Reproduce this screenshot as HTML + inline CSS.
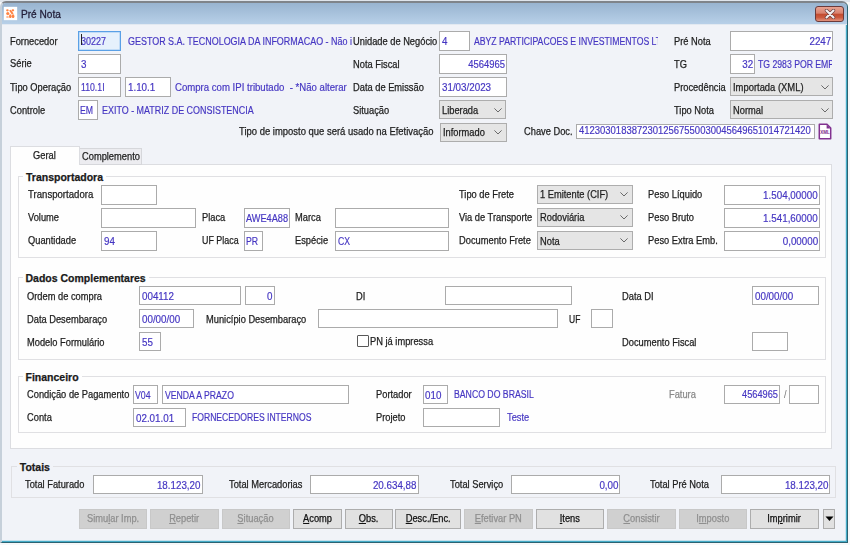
<!DOCTYPE html><html><head><meta charset="utf-8"><style>
*{margin:0;padding:0;box-sizing:border-box}
html,body{width:850px;height:545px;overflow:hidden;background:#f7f8f9;font-family:"Liberation Sans",sans-serif;font-size:10px;color:#1e1e1e}
#win{position:absolute;left:0;top:1px;width:848px;height:542px;background:#f1f3f8;border-top:2px solid #7f848a;border-left:2px solid #c6d0da;border-right:1.3px solid #2b6372;border-bottom:1.3px solid #2b6372;border-radius:6px 6px 0 0;box-shadow:inset -1.2px -1.2px 0 #45acc8;overflow:hidden}
#tb{position:absolute;left:0;top:0;width:100%;height:20.7px;background:linear-gradient(#98b4d0,#b8d0e8)}
#tbl{position:absolute;left:0;top:20.7px;width:100%;height:1px;background:#e2e9f1}
.abs{position:absolute}
.l,.v,.gt{position:absolute;white-space:nowrap;line-height:14px;height:14px;transform-origin:0 50%;-webkit-text-stroke:0.25px currentColor}
.ft{position:absolute;white-space:nowrap;line-height:14px;height:14px;-webkit-text-stroke:0.25px currentColor}
.bt{display:inline-block;white-space:nowrap;line-height:17px;-webkit-text-stroke:0.25px currentColor}
.v{color:#4536c2;-webkit-text-stroke:0.18px currentColor !important}
.gt{font-weight:bold;font-size:10.5px;background:#fefefe;padding:0 3px;color:#1a1a1a;line-height:15px;height:15px}
.f{position:absolute;background:#fff;border:1px solid #ababab;color:#4536c2;overflow:hidden}
.f .ft{-webkit-text-stroke:0.18px currentColor}
.c{position:absolute;background:#e5e5e5;border:1px solid #adadad;color:#1e1e1e;overflow:hidden}
.arr{position:absolute}
.g{position:absolute;border:1px solid #e0e0e3}
.b{position:absolute;background:#e1e1e1;border:1px solid #adadad;text-align:center;color:#111;white-space:nowrap}
.b.d{background:#d0d0d0;border-color:#c8c8c8;color:#8f8f8f}
u{text-decoration:underline}
</style></head><body>
<div class="abs" style="left:0;top:0;width:850px;height:2px;background:#dfe5ec"></div>
<div id="win">
<div id="tb"></div><div id="tbl"></div>
</div>
<div class="abs" style="left:4px;top:7px;width:13px;height:13px;background:#fff;box-shadow:0 0 1px #fff"></div>
<svg class="abs" style="left:6.3px;top:8.6px" width="8.5" height="9.6" viewBox="0 0 8.5 9.6"><defs><filter id="bl" x="-20%" y="-20%" width="140%" height="140%"><feGaussianBlur stdDeviation="0.3"/></filter></defs><g fill="#ff8444" filter="url(#bl)"><ellipse cx="1.4" cy="1.3" rx="1.3" ry="1.1"/><ellipse cx="6.9" cy="1.3" rx="1.3" ry="1.1"/><path d="M3.2 1.4 L4.8 0.7 L7.6 4.6 L5.8 5.4 Z"/><ellipse cx="1.8" cy="4.4" rx="1.6" ry="1.5"/><ellipse cx="1.5" cy="8" rx="1.3" ry="1.3" opacity="0.55"/><ellipse cx="4.3" cy="7.3" rx="1.3" ry="2"/><ellipse cx="7.1" cy="7.3" rx="1.3" ry="2"/></g></svg>
<div class="abs" style="left:21px;top:5.7px;font-size:11px;line-height:16px;color:#231f3a;transform:scaleX(0.92);transform-origin:0 50%;-webkit-text-stroke:0.3px #231f3a">Pré Nota</div>
<div class="abs" style="left:815.3px;top:6.2px;width:28.8px;height:15.9px;border:1px solid #6b3a3a;border-radius:3px;background:linear-gradient(#e8a393 0%,#d9826e 45%,#c24a2e 50%,#cc5b3f 75%,#e2937e 100%)"></div>
<svg class="abs" style="left:823.5px;top:9px" width="12" height="10" viewBox="0 0 12 10"><path d="M2.5 1.5 L9.5 8.5 M9.5 1.5 L2.5 8.5" stroke="#6a4040" stroke-width="3.4" stroke-linecap="round"/><path d="M2.5 1.5 L9.5 8.5 M9.5 1.5 L2.5 8.5" stroke="#f4f0f0" stroke-width="2.1" stroke-linecap="round"/></svg>
<div class="l" style="left:10px;top:35.0px;transform:scaleX(0.93);">Fornecedor</div>
<div class="f" style="left:78px;top:31px;width:43px;height:20px;background:#e6f1fc;border:1px solid #5aa0e6;box-shadow:inset 0 0 0 0.5px #9cc8f2"><span class="ft" style="left:2px;top:3.2px;transform:scaleX(0.9);transform-origin:0 50%">30227</span></div>
<div class="abs" style="left:81px;top:34px;width:1px;height:11px;background:#222"></div>
<div class="abs" style="left:127.6px;top:34.5px;width:224px;height:14px;overflow:hidden"><span class="ft v" style="left:0;top:0;transform:scaleX(0.895);transform-origin:0 50%">GESTOR S.A. TECNOLOGIA DA INFORMACAO - Não informado</span></div>
<div class="l" style="left:352.5px;top:35.0px;transform:scaleX(0.93);">Unidade de Negócio</div>
<div class="f" style="left:439px;top:31px;width:31px;height:20px;"><span class="ft" style="left:2px;top:3.2px;transform:scaleX(0.98);transform-origin:0 50%">4</span></div>
<div class="abs" style="left:473.7px;top:34.5px;width:184.5px;height:14px;overflow:hidden"><span class="ft v" style="left:0;top:0;transform:scaleX(0.867);transform-origin:0 50%">ABYZ PARTICIPACOES E INVESTIMENTOS LTDA</span></div>
<div class="l" style="left:674px;top:35.0px;transform:scaleX(0.93);">Pré Nota</div>
<div class="f" style="left:730px;top:31px;width:103px;height:20px;"><span class="ft" style="right:1px;top:3.2px;transform:scaleX(0.98);transform-origin:100% 50%">2247</span></div>
<div class="l" style="left:10px;top:56.7px;transform:scaleX(0.93);">Série</div>
<div class="f" style="left:78px;top:54px;width:43px;height:20px;"><span class="ft" style="left:2px;top:3.2px;transform:scaleX(0.98);transform-origin:0 50%">3</span></div>
<div class="l" style="left:352.5px;top:58.0px;transform:scaleX(0.93);">Nota Fiscal</div>
<div class="f" style="left:439px;top:54px;width:67.5px;height:20px;"><span class="ft" style="right:1px;top:3.2px;transform:scaleX(0.943);transform-origin:100% 50%">4564965</span></div>
<div class="l" style="left:674px;top:58.0px;transform:scaleX(0.93);">TG</div>
<div class="f" style="left:730px;top:54px;width:24.5px;height:20px;"><span class="ft" style="right:0.30000000000000004px;top:3.2px;transform:scaleX(0.98);transform-origin:100% 50%">32</span></div>
<div class="abs" style="left:758.2px;top:57.5px;width:74px;height:14px;overflow:hidden"><span class="ft v" style="left:0;top:0;transform:scaleX(0.867);transform-origin:0 50%">TG 2983 POR EMPRESA</span></div>
<div class="l" style="left:10px;top:81.0px;transform:scaleX(0.93);">Tipo Operação</div>
<div class="f" style="left:78px;top:77px;width:43px;height:20px;"><span class="ft" style="left:2px;top:3.2px;transform:scaleX(0.87);transform-origin:0 50%">110.1I</span></div>
<div class="f" style="left:125px;top:77px;width:46px;height:20px;"><span class="ft" style="left:2px;top:3.2px;transform:scaleX(0.98);transform-origin:0 50%">1.10.1</span></div>
<div class="v" style="left:175px;top:80.5px;transform:scaleX(0.96);">Compra com IPI tributado&nbsp; - *Não alterar</div>
<div class="l" style="left:352.5px;top:81.0px;transform:scaleX(0.93);">Data de Emissão</div>
<div class="f" style="left:439px;top:77px;width:67.5px;height:20px;"><span class="ft" style="left:2px;top:3.2px;transform:scaleX(0.98);transform-origin:0 50%">31/03/2023</span></div>
<div class="l" style="left:674px;top:81.0px;transform:scaleX(0.93);">Procedência</div>
<div class="c" style="left:730px;top:77px;width:103px;height:19px;"><span class="ft" style="left:2px;top:2.7px;transform:scaleX(0.94);transform-origin:0 50%">Importada (XML)</span><svg class="arr" style="right:3.5px;top:6.55px" width="8" height="4.5" viewBox="0 0 8 4.5"><path d="M0.4 0.4 L4 4 L7.6 0.4" fill="none" stroke="#6a6a6a" stroke-width="1"/></svg></div>
<div class="l" style="left:10px;top:104.0px;transform:scaleX(0.93);">Controle</div>
<div class="f" style="left:78px;top:100px;width:20px;height:20px;"><span class="ft" style="left:1px;top:3.2px;transform:scaleX(0.87);transform-origin:0 50%">EM</span></div>
<div class="v" style="left:101.7px;top:103.5px;transform:scaleX(0.894);">EXITO - MATRIZ DE CONSISTENCIA</div>
<div class="l" style="left:352.5px;top:104.0px;transform:scaleX(0.93);">Situação</div>
<div class="c" style="left:439px;top:100.2px;width:67px;height:18.799999999999997px;"><span class="ft" style="left:2px;top:2.5999999999999988px;transform:scaleX(0.93);transform-origin:0 50%">Liberada</span><svg class="arr" style="right:3.5px;top:6.449999999999998px" width="8" height="4.5" viewBox="0 0 8 4.5"><path d="M0.4 0.4 L4 4 L7.6 0.4" fill="none" stroke="#6a6a6a" stroke-width="1"/></svg></div>
<div class="l" style="left:674px;top:104.0px;transform:scaleX(0.93);">Tipo Nota</div>
<div class="c" style="left:730px;top:100.2px;width:103px;height:18.799999999999997px;"><span class="ft" style="left:2px;top:2.5999999999999988px;transform:scaleX(0.93);transform-origin:0 50%">Normal</span><svg class="arr" style="right:3.5px;top:6.449999999999998px" width="8" height="4.5" viewBox="0 0 8 4.5"><path d="M0.4 0.4 L4 4 L7.6 0.4" fill="none" stroke="#6a6a6a" stroke-width="1"/></svg></div>
<div class="l" style="left:239px;top:125.0px;transform:scaleX(0.945);">Tipo de imposto que será usado na Efetivação</div>
<div class="c" style="left:439.5px;top:123px;width:67.0px;height:18.5px;"><span class="ft" style="left:2px;top:2.45px;transform:scaleX(0.93);transform-origin:0 50%">Informado</span><svg class="arr" style="right:3.5px;top:6.3px" width="8" height="4.5" viewBox="0 0 8 4.5"><path d="M0.4 0.4 L4 4 L7.6 0.4" fill="none" stroke="#6a6a6a" stroke-width="1"/></svg></div>
<div class="l" style="left:524px;top:124.5px;transform:scaleX(0.93);">Chave Doc.</div>
<div class="f" style="left:575.5px;top:123.5px;width:239.5px;height:15.300000000000011px;"><span class="ft" style="left:2px;top:-0.8499999999999943px;transform:scaleX(0.947);transform-origin:0 50%">41230301838723012567550030045649651014721420</span></div>
<svg class="abs" style="left:817.5px;top:122.5px" width="14" height="17" viewBox="0 0 14 17"><path d="M1.3 1.3 H9 L12.7 5 V15.7 H1.3 Z" fill="#fff" stroke="#823290" stroke-width="1.5" stroke-linejoin="round"/><path d="M8.6 1.5 L12.5 5.4 L8.6 5.4 Z" fill="#823290"/><text x="6.9" y="11.3" font-size="5.2" text-anchor="middle" fill="#7a2888" font-family="Liberation Sans" font-weight="bold" textLength="9.5" lengthAdjust="spacingAndGlyphs">XML</text></svg>
<div class="abs" style="left:10px;top:164px;width:822px;height:284.8px;background:#fefefe;border:1px solid #dcdde1"></div>
<div class="abs" style="left:79px;top:148px;width:63px;height:16.5px;background:#ececf0;border:1px solid #d6d7db;border-left:none"></div>
<div class="abs" style="left:10px;top:146.3px;width:69.5px;height:18.7px;background:#fefefe;border:1px solid #dcdde1;border-bottom:none"></div>
<div class="l" style="left:33px;top:149.0px;transform:scaleX(0.93);">Geral</div>
<div class="l" style="left:81.5px;top:150.0px;transform:scaleX(0.93);">Complemento</div>
<div class="g" style="left:18px;top:176px;width:807.5px;height:82px;"></div>
<div class="gt" style="left:23px;top:170.1px;transform:scaleX(1.0);background:#fefefe">Transportadora</div>
<div class="l" style="left:28px;top:188.2px;transform:scaleX(0.96);">Transportadora</div>
<div class="f" style="left:100.7px;top:185.2px;width:56.3px;height:19.599999999999994px;"></div>
<div class="l" style="left:28px;top:211.0px;transform:scaleX(0.93);">Volume</div>
<div class="f" style="left:100.7px;top:208px;width:95.8px;height:19.599999999999994px;"></div>
<div class="l" style="left:28px;top:234.2px;transform:scaleX(0.93);">Quantidade</div>
<div class="f" style="left:100.7px;top:231.2px;width:56.3px;height:19.599999999999994px;"><span class="ft" style="left:2px;top:2.9999999999999973px;transform:scaleX(0.98);transform-origin:0 50%">94</span></div>
<div class="l" style="left:202px;top:211.0px;transform:scaleX(0.93);">Placa</div>
<div class="f" style="left:243.5px;top:208px;width:46.0px;height:19.599999999999994px;"><span class="ft" style="left:1px;top:2.9999999999999973px;transform:scaleX(0.92);transform-origin:0 50%">AWE4A88</span></div>
<div class="l" style="left:202px;top:234.2px;transform:scaleX(0.89);">UF Placa</div>
<div class="f" style="left:243.5px;top:231.2px;width:19.5px;height:19.599999999999994px;"><span class="ft" style="left:1px;top:2.9999999999999973px;transform:scaleX(0.87);transform-origin:0 50%">PR</span></div>
<div class="l" style="left:295px;top:211.0px;transform:scaleX(0.93);">Marca</div>
<div class="f" style="left:335px;top:208px;width:113.5px;height:19.599999999999994px;"></div>
<div class="l" style="left:295px;top:234.2px;transform:scaleX(0.93);">Espécie</div>
<div class="f" style="left:335px;top:231.2px;width:113.5px;height:19.599999999999994px;"><span class="ft" style="left:2px;top:2.9999999999999973px;transform:scaleX(0.87);transform-origin:0 50%">CX</span></div>
<div class="l" style="left:458.7px;top:188.2px;transform:scaleX(0.93);">Tipo de Frete</div>
<div class="l" style="left:458.7px;top:211.0px;transform:scaleX(0.93);">Via de Transporte</div>
<div class="l" style="left:458.7px;top:234.2px;transform:scaleX(0.93);">Documento Frete</div>
<div class="c" style="left:536.5px;top:185px;width:96.0px;height:18.5px;"><span class="ft" style="left:2px;top:2.45px;transform:scaleX(0.93);transform-origin:0 50%">1 Emitente (CIF)</span><svg class="arr" style="right:3.5px;top:6.3px" width="8" height="4.5" viewBox="0 0 8 4.5"><path d="M0.4 0.4 L4 4 L7.6 0.4" fill="none" stroke="#6a6a6a" stroke-width="1"/></svg></div>
<div class="c" style="left:536.5px;top:208px;width:96.0px;height:18.5px;"><span class="ft" style="left:2px;top:2.45px;transform:scaleX(0.93);transform-origin:0 50%">Rodoviária</span><svg class="arr" style="right:3.5px;top:6.3px" width="8" height="4.5" viewBox="0 0 8 4.5"><path d="M0.4 0.4 L4 4 L7.6 0.4" fill="none" stroke="#6a6a6a" stroke-width="1"/></svg></div>
<div class="c" style="left:536.5px;top:231.2px;width:96.0px;height:18.5px;"><span class="ft" style="left:2px;top:2.45px;transform:scaleX(0.93);transform-origin:0 50%">Nota</span><svg class="arr" style="right:3.5px;top:6.3px" width="8" height="4.5" viewBox="0 0 8 4.5"><path d="M0.4 0.4 L4 4 L7.6 0.4" fill="none" stroke="#6a6a6a" stroke-width="1"/></svg></div>
<div class="l" style="left:648.2px;top:188.2px;transform:scaleX(0.93);">Peso Líquido</div>
<div class="l" style="left:648.2px;top:211.0px;transform:scaleX(0.93);">Peso Bruto</div>
<div class="l" style="left:648.2px;top:234.2px;transform:scaleX(0.93);">Peso Extra Emb.</div>
<div class="f" style="left:723.5px;top:185.2px;width:96.20000000000005px;height:19.599999999999994px;"><span class="ft" style="right:1px;top:2.9999999999999973px;transform:scaleX(0.98);transform-origin:100% 50%">1.504,00000</span></div>
<div class="f" style="left:723.5px;top:208px;width:96.20000000000005px;height:19.599999999999994px;"><span class="ft" style="right:1px;top:2.9999999999999973px;transform:scaleX(0.98);transform-origin:100% 50%">1.541,60000</span></div>
<div class="f" style="left:723.5px;top:231.2px;width:96.20000000000005px;height:19.599999999999994px;"><span class="ft" style="right:1px;top:2.9999999999999973px;transform:scaleX(0.98);transform-origin:100% 50%">0,00000</span></div>
<div class="g" style="left:18px;top:277px;width:807.5px;height:83px;"></div>
<div class="gt" style="left:22.5px;top:271.1px;transform:scaleX(1.0);background:#fefefe">Dados Complementares</div>
<div class="l" style="left:27px;top:289.8px;transform:scaleX(0.93);">Ordem de compra</div>
<div class="f" style="left:139.3px;top:286.1px;width:102.19999999999999px;height:19.0px;"><span class="ft" style="left:2px;top:2.7px;transform:scaleX(0.98);transform-origin:0 50%">004112</span></div>
<div class="f" style="left:245.3px;top:286.1px;width:29.69999999999999px;height:19.0px;"><span class="ft" style="right:1px;top:2.7px;transform:scaleX(0.98);transform-origin:100% 50%">0</span></div>
<div class="l" style="left:355.8px;top:289.8px;transform:scaleX(0.93);">DI</div>
<div class="f" style="left:444.8px;top:286.1px;width:126.99999999999994px;height:19.0px;"></div>
<div class="l" style="left:621.6px;top:289.8px;transform:scaleX(0.93);">Data DI</div>
<div class="f" style="left:751.9px;top:286.1px;width:66.80000000000007px;height:19.0px;"><span class="ft" style="left:2px;top:2.7px;transform:scaleX(0.98);transform-origin:0 50%">00/00/00</span></div>
<div class="l" style="left:27px;top:312.9px;transform:scaleX(0.93);">Data Desembaraço</div>
<div class="f" style="left:139.3px;top:309.2px;width:54.69999999999999px;height:19.0px;"><span class="ft" style="left:2px;top:2.7px;transform:scaleX(0.98);transform-origin:0 50%">00/00/00</span></div>
<div class="l" style="left:205.7px;top:312.9px;transform:scaleX(0.93);">Município Desembaraço</div>
<div class="f" style="left:317.7px;top:309.2px;width:240.00000000000006px;height:19.0px;"></div>
<div class="l" style="left:568.5px;top:312.9px;transform:scaleX(0.85);">UF</div>
<div class="f" style="left:590.5px;top:309.2px;width:22.700000000000045px;height:19.0px;"></div>
<div class="l" style="left:27px;top:335.59999999999997px;transform:scaleX(0.93);">Modelo Formulário</div>
<div class="f" style="left:139.3px;top:331.9px;width:21.899999999999977px;height:19.0px;"><span class="ft" style="left:2px;top:2.7px;transform:scaleX(0.98);transform-origin:0 50%">55</span></div>
<div class="abs" style="left:357.3px;top:335.2px;width:11.5px;height:11.7px;background:#fff;border:1.2px solid #585858;border-radius:1px"></div>
<div class="l" style="left:369.8px;top:335.09999999999997px;transform:scaleX(0.93);">PN já impressa</div>
<div class="l" style="left:621.6px;top:335.59999999999997px;transform:scaleX(0.93);">Documento Fiscal</div>
<div class="f" style="left:751.9px;top:331.9px;width:35.700000000000045px;height:19.0px;"></div>
<div class="g" style="left:18px;top:376px;width:807.5px;height:57px;"></div>
<div class="gt" style="left:22.5px;top:370.1px;transform:scaleX(1.0);background:#fefefe">Financeiro</div>
<div class="l" style="left:27px;top:388.0px;transform:scaleX(0.93);">Condição de Pagamento</div>
<div class="f" style="left:133.1px;top:385px;width:24.700000000000017px;height:19px;"><span class="ft" style="left:1px;top:2.7px;transform:scaleX(0.87);transform-origin:0 50%">V04</span></div>
<div class="f" style="left:162.3px;top:385px;width:187.0px;height:19px;"><span class="ft" style="left:1.5px;top:2.7px;transform:scaleX(0.867);transform-origin:0 50%">VENDA A PRAZO</span></div>
<div class="l" style="left:27px;top:411.0px;transform:scaleX(0.93);">Conta</div>
<div class="f" style="left:133.1px;top:408px;width:52.900000000000006px;height:19px;"><span class="ft" style="left:1.5px;top:2.7px;transform:scaleX(0.98);transform-origin:0 50%">02.01.01</span></div>
<div class="v" style="left:191.6px;top:410.5px;transform:scaleX(0.86);">FORNECEDORES INTERNOS</div>
<div class="l" style="left:376.1px;top:388.0px;transform:scaleX(0.93);">Portador</div>
<div class="f" style="left:422.6px;top:385px;width:25.599999999999966px;height:19px;"><span class="ft" style="left:1px;top:2.7px;transform:scaleX(0.98);transform-origin:0 50%">010</span></div>
<div class="v" style="left:454px;top:387.5px;transform:scaleX(0.87);">BANCO DO BRASIL</div>
<div class="l" style="left:376.1px;top:411.0px;transform:scaleX(0.93);">Projeto</div>
<div class="f" style="left:422.6px;top:408px;width:77.59999999999997px;height:19px;"></div>
<div class="v" style="left:507.3px;top:410.5px;transform:scaleX(0.93);">Teste</div>
<div class="l" style="left:669.2px;top:388.0px;transform:scaleX(0.93);color:#8a8a8a">Fatura</div>
<div class="f" style="left:723.5px;top:384.7px;width:56.700000000000045px;height:19.19999999999999px;"><span class="ft" style="right:1px;top:2.7999999999999945px;transform:scaleX(0.92);transform-origin:100% 50%">4564965</span></div>
<div class="l" style="left:783.5px;top:388.0px;transform:scaleX(0.93);color:#777;-webkit-text-stroke:0">/</div>
<div class="f" style="left:789px;top:384.7px;width:29.700000000000045px;height:19.19999999999999px;"></div>
<div class="g" style="left:11.3px;top:466px;width:824.7px;height:32.30000000000001px;"></div>
<div class="gt" style="left:16.8px;top:460.1px;transform:scaleX(1.0);background:#f1f3f8">Totais</div>
<div class="l" style="left:24.5px;top:478.0px;transform:scaleX(0.93);">Total Faturado</div>
<div class="f" style="left:93.2px;top:475.1px;width:109.60000000000001px;height:19.0px;"><span class="ft" style="right:1px;top:2.7px;transform:scaleX(0.98);transform-origin:100% 50%">18.123,20</span></div>
<div class="l" style="left:229.3px;top:478.0px;transform:scaleX(0.93);">Total Mercadorias</div>
<div class="f" style="left:309.7px;top:475.1px;width:109.19999999999999px;height:19.0px;"><span class="ft" style="right:1px;top:2.7px;transform:scaleX(0.98);transform-origin:100% 50%">20.634,88</span></div>
<div class="l" style="left:449.9px;top:478.0px;transform:scaleX(0.93);">Total Serviço</div>
<div class="f" style="left:511px;top:475.1px;width:109.29999999999995px;height:19.0px;"><span class="ft" style="right:1px;top:2.7px;transform:scaleX(0.98);transform-origin:100% 50%">0,00</span></div>
<div class="l" style="left:650.4px;top:478.0px;transform:scaleX(0.93);">Total Pré Nota</div>
<div class="f" style="left:721px;top:475.1px;width:109.29999999999995px;height:19.0px;"><span class="ft" style="right:1px;top:2.7px;transform:scaleX(0.98);transform-origin:100% 50%">18.123,20</span></div>
<div class="b d" style="left:78.5px;top:509.2px;width:68.5px;height:20.000000000000057px;"><span class="bt" style="transform:scaleX(0.93)">Simu<u>l</u>ar Imp.</span></div>
<div class="b d" style="left:150px;top:509.2px;width:68.69999999999999px;height:20.000000000000057px;"><span class="bt" style="transform:scaleX(0.93)"><u>R</u>epetir</span></div>
<div class="b d" style="left:221.6px;top:509.2px;width:68.4px;height:20.000000000000057px;"><span class="bt" style="transform:scaleX(0.93)"><u>S</u>ituação</span></div>
<div class="b" style="left:293.1px;top:509.2px;width:49.19999999999999px;height:20.000000000000057px;"><span class="bt" style="transform:scaleX(0.93)"><u>A</u>comp</span></div>
<div class="b" style="left:345px;top:509.2px;width:47.60000000000002px;height:20.000000000000057px;"><span class="bt" style="transform:scaleX(0.93)"><u>O</u>bs.</span></div>
<div class="b" style="left:395.3px;top:509.2px;width:66.0px;height:20.000000000000057px;"><span class="bt" style="transform:scaleX(0.93)"><u>D</u>esc./Enc.</span></div>
<div class="b d" style="left:464px;top:509.2px;width:68.79999999999995px;height:20.000000000000057px;"><span class="bt" style="transform:scaleX(0.93)"><u>E</u>fetivar PN</span></div>
<div class="b" style="left:535.9px;top:509.2px;width:68.39999999999998px;height:20.000000000000057px;"><span class="bt" style="transform:scaleX(0.93)"><u>I</u>tens</span></div>
<div class="b d" style="left:607.1px;top:509.2px;width:68.79999999999995px;height:20.000000000000057px;"><span class="bt" style="transform:scaleX(0.93)"><u>C</u>onsistir</span></div>
<div class="b d" style="left:678.8px;top:509.2px;width:68.30000000000007px;height:20.000000000000057px;"><span class="bt" style="transform:scaleX(0.93)">I<u>m</u>posto</span></div>
<div class="b" style="left:750.4px;top:509.2px;width:68.30000000000007px;height:20.000000000000057px;"><span class="bt" style="transform:scaleX(0.93)">Im<u>p</u>rimir</span></div>
<div class="b" style="left:822.8px;top:509.2px;width:12px;height:20px"></div>
<svg class="abs" style="left:824.5px;top:516px" width="9" height="6" viewBox="0 0 9 6"><path d="M0.5 0.5 H8.5 L4.5 5 Z" fill="#000"/></svg>
</body></html>
